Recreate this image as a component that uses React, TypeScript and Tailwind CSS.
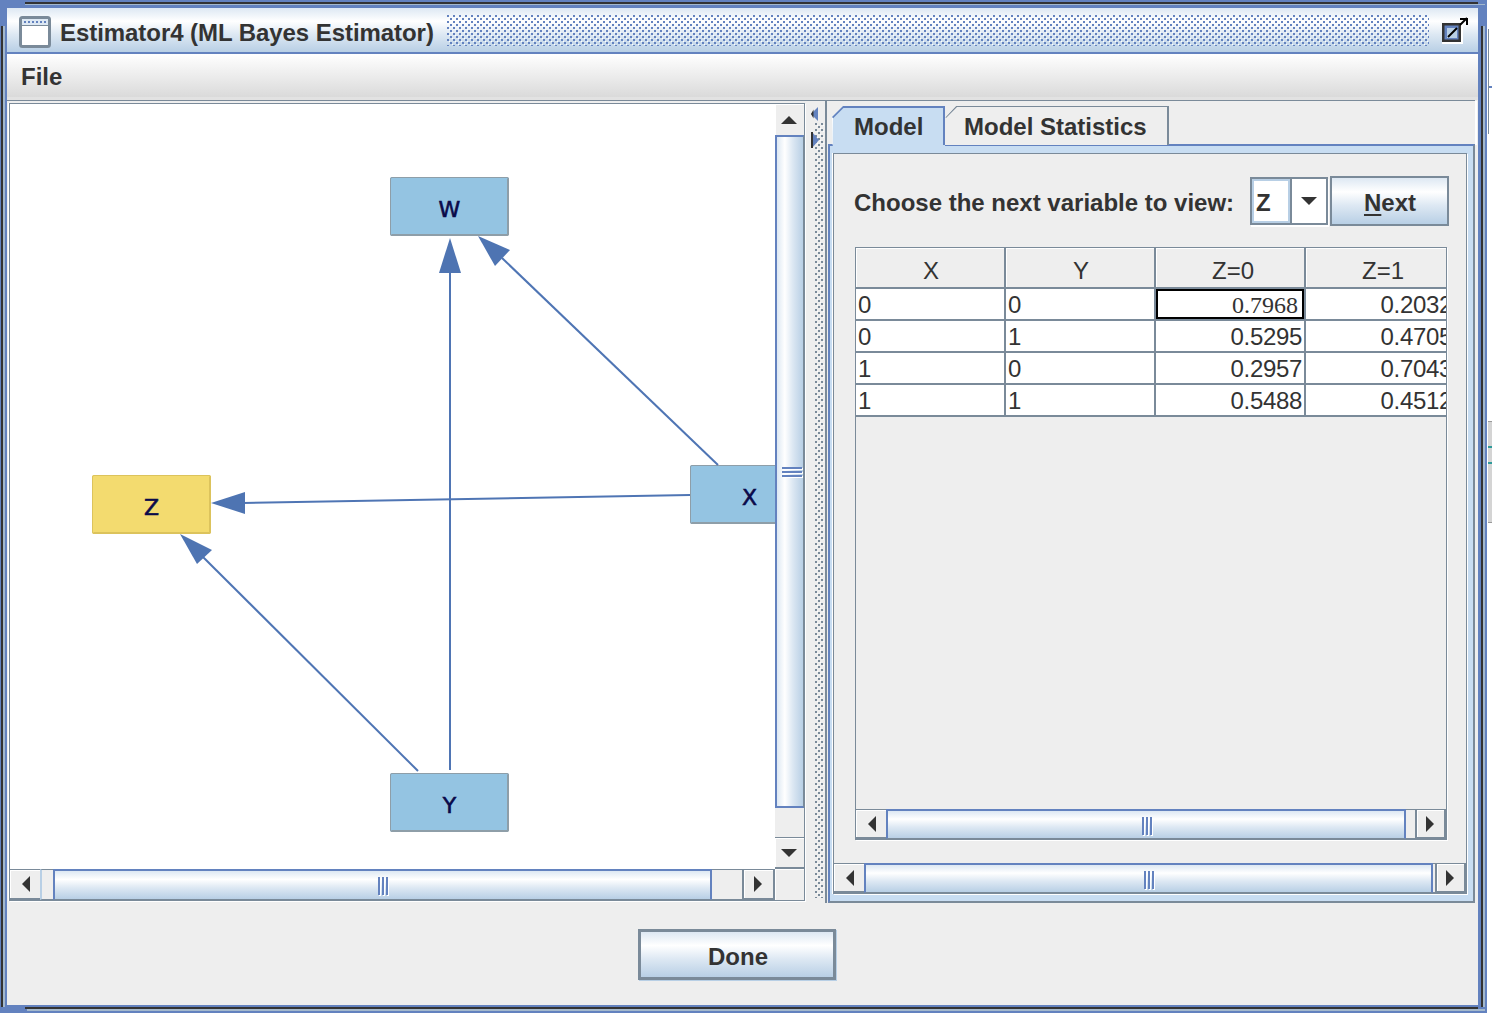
const FONT = 'font-["Liberation_Sans",Arial,sans-serif]';

// Metal "ocean" gradients
const oceanV =
  'bg-[linear-gradient(180deg,#DDE8F3_0%,#ffffff_30%,#DDE8F3_60%,#B8CFE5_100%)]';
const oceanH =
  'bg-[linear-gradient(90deg,#DDE8F3_0%,#ffffff_30%,#DDE8F3_60%,#B8CFE5_100%)]';

type Dir = 'up' | 'down' | 'left' | 'right';

function Arrow({ dir }: { dir: Dir }) {
  const horizontal = dir === 'left' || dir === 'right';
  const points = {
    up: '8,0 16,8 0,8',
    down: '0,0 16,0 8,8',
    left: '8,0 8,16 0,8',
    right: '0,0 8,8 0,16',
  }[dir];
  return (
    <svg width={horizontal ? 8 : 16} height={horizontal ? 16 : 8} className="block">
      <polygon points={points} fill="#333333" />
    </svg>
  );
}

function ScrollButton({ dir, className }: { dir: Dir; className: string }) {
  return (
    <div
      className={`flex shrink-0 items-center justify-center bg-[#eeeeee] border-[#7A8A99] shadow-[inset_1px_1px_0_#fff] ${className}`}
    >
      <Arrow dir={dir} />
    </div>
  );
}

function HScrollBar({ left, thumb, gap, right, grip }: { left: number; thumb: number; gap: number; right: number; grip: number }) {
  return (
    <div className="flex h-full w-full bg-[#eeeeee]">
      <div style={{ width: left }} className="flex shrink-0">
        <ScrollButton dir="left" className="w-[30px] border-t border-b-2 pl-[1px]" />
        <div className="flex-1 border-y border-l-2 border-[#7A8A99] border-l-[#B8CFE5] bg-[#eeeeee]" />
      </div>
      <div
        style={{ width: thumb }}
        className={`relative shrink-0 border-t-2 border-l-2 border-r-2 border-b border-[#6382BF] border-b-[#7A8A99] ${oceanV}`}
      >
        <div style={{ left: grip }} className="absolute top-[6px] flex gap-[2px]">
          <div className="h-[18px] w-[2px] bg-[#6382BF] shadow-[1px_1px_0_#fff]" />
          <div className="h-[18px] w-[2px] bg-[#6382BF] shadow-[1px_1px_0_#fff]" />
          <div className="h-[18px] w-[2px] bg-[#6382BF] shadow-[1px_1px_0_#fff]" />
        </div>
      </div>
      <div style={{ width: gap }} className="shrink-0 border-y border-[#7A8A99] bg-[#eeeeee]" />
      <ScrollButton dir="right" className="flex-1 border-t border-l-2 border-r-2 border-b-2 pr-[1px]" />
    </div>
  );
}

function VScrollBar() {
  return (
    <div className="flex h-full w-full flex-col bg-[#eeeeee]">
      <ScrollButton dir="up" className="h-[31px] border-l-0 pr-[1px]" />
      <div className={`relative h-[673px] shrink-0 border-2 border-[#6382BF] border-r-[#7A8A99] border-r ${oceanH}`}>
        <div className="absolute left-[5px] top-[330px] flex flex-col gap-[2px]">
          <div className="h-[2px] w-[20px] bg-[#6382BF] shadow-[1px_1px_0_#fff]" />
          <div className="h-[2px] w-[20px] bg-[#6382BF] shadow-[1px_1px_0_#fff]" />
          <div className="h-[2px] w-[20px] bg-[#6382BF] shadow-[1px_1px_0_#fff]" />
        </div>
      </div>
      <div className="h-[30px] shrink-0 border-b border-[#7A8A99]" />
      <ScrollButton dir="down" className="flex-1 border-b-2 pr-[1px]" />
    </div>
  );
}

function Bumps({ id, width, height, fg, bg }: { id: string; width: number; height: number; fg: string; bg: string }) {
  return (
    <svg width={width} height={height} className="block shrink-0">
      <defs>
        <pattern id={id} width="6" height="6" patternUnits="userSpaceOnUse">
          <rect x="0" y="0" width="2" height="2" fill={fg} />
          <rect x="3" y="3" width="2" height="2" fill={fg} />
          <rect x="2" y="2" width="1" height="1" fill={bg} />
          <rect x="5" y="5" width="1" height="1" fill={bg} />
        </pattern>
      </defs>
      <rect width={width} height={height} fill={`url(#${id})`} />
    </svg>
  );
}

function TitleIcon() {
  return (
    <svg width="32" height="32" viewBox="0 0 32 32" className="mt-[8px] block shrink-0">
      <rect x="1.5" y="1.5" width="29" height="29" rx="2" fill="#fff" stroke="#7A8A99" strokeWidth="3" />
      <rect x="3" y="3" width="26" height="6" fill="#DDE8F3" />
      <path d="M5 6h22" stroke="#6382BF" strokeWidth="2" strokeDasharray="2 2" />
      <rect x="3" y="9" width="26" height="1" fill="#7A8A99" />
    </svg>
  );
}

function MaximizeIcon() {
  return (
    <svg width="27" height="28" viewBox="0 0 27 28" className="mt-[9px] block shrink-0">
      <rect x="0" y="6" width="21" height="21" fill="#fff" />
      <rect x="1.25" y="7.25" width="16.5" height="16.5" fill="#6382BF" stroke="#333" strokeWidth="2.5" />
      <rect x="5" y="11" width="10" height="10" fill="#B8CFE5" />
      <path d="M6 20 L15 11" stroke="#000" strokeWidth="2" />
      <path d="M18 1h8v7h-2V3h-6z" fill="#000" />
      <path d="M18 8l7-7" stroke="#000" strokeWidth="2" />
    </svg>
  );
}

function GraphNode({ label, left, top, color }: { label: string; left: number; top: number; color: 'blue' | 'yellow' }) {
  return (
    <div
      style={{ left, top }}
      className={`absolute flex h-[59px] w-[119px] items-center justify-center rounded-[2px] border-2 pt-[6px] leading-none text-[#0a0a4a] font-["DejaVu_Sans",sans-serif] ${
        color === 'blue'
          ? 'border-transparent border-r-[#8e9ea8] border-b-[#8e9ea8] outline outline-[#8e9ea8] -outline-offset-1 bg-[#94C4E2]'
          : 'border-transparent border-r-[#dcc35c] border-b-[#dcc35c] outline outline-[#dcc35c] -outline-offset-1 bg-[#F3DB6F]'
      }`}
    >
      <span className="text-[22px] [-webkit-text-stroke:0.6px_#0a0a4a]">{label}</span>
    </div>
  );
}

function Graph() {
  return (
    <div className="relative h-[765px] w-[765px] shrink-0 overflow-hidden bg-white">
      <GraphNode label="W" left={380} top={73} color="blue" />
      <GraphNode label="Z" left={82} top={371} color="yellow" />
      <GraphNode label="X" left={680} top={361} color="blue" />
      <GraphNode label="Y" left={380} top={669} color="blue" />
      <svg width="765" height="765" viewBox="10 104 765 765" className="absolute left-0 top-0">
        <g stroke="#4F75B4" strokeWidth="2" fill="none">
          <line x1="450" y1="770" x2="450" y2="270" />
          <line x1="690" y1="495" x2="243" y2="503" />
          <line x1="418" y1="771" x2="203" y2="557" />
          <line x1="718" y1="465" x2="502" y2="258" />
        </g>
        <g fill="#4E74B2">
          <polygon points="450,238 461,273 439,273" />
          <polygon points="211,503 245,492 245,514" />
          <polygon points="180,534 212,550 197,564" />
          <polygon points="478,236 510,250 495,266" />
        </g>
      </svg>
    </div>
  );
}

const ROWS = [
  ['0', '0', '0.7968', '0.2032'],
  ['0', '1', '0.5295', '0.4705'],
  ['1', '0', '0.2957', '0.7043'],
  ['1', '1', '0.5488', '0.4512'],
];

function HeaderCell({ label, className }: { label: string; className: string }) {
  return (
    <div className={`flex h-full w-[150px] shrink-0 items-center justify-center border-r-2 border-b-2 border-[#7A8A99] bg-[#eeeeee] pt-[7px] shadow-[inset_1px_1px_0_#fff] ${className}`}>
      {label}
    </div>
  );
}

function ProbTable() {
  return (
    <div className="flex flex-1 flex-col overflow-hidden text-[24px] leading-none font-normal text-[#333333]">
      <div className="flex h-[41px] w-[600px] shrink-0">
        <HeaderCell label="X" className="pl-[2px]" />
        <HeaderCell label="Y" className="pl-[2px]" />
        <HeaderCell label="Z=0" className="pl-[6px]" />
        <HeaderCell label="Z=1" className="pl-[6px]" />
      </div>
      {ROWS.map((row, r) => (
        <div key={r} className="flex h-[32px] w-[600px] shrink-0 bg-white">
          {row.map((val, c) => {
            if (r === 0 && c === 2) {
              return (
                <div key={c} className="h-full w-[150px] shrink-0 border-r-2 border-b-2 border-[#7A8A99]">
                  <div className='flex h-full items-center justify-end border-2 border-black pr-[4px] pt-[2px] font-["Liberation_Serif",serif]'>
                    {val}
                  </div>
                </div>
              );
            }
            return (
              <div
                key={c}
                className={`flex h-full w-[150px] shrink-0 items-center border-r-2 border-b-2 border-[#7A8A99] pt-[2px] ${
                  c < 2 ? 'justify-start pl-[2px]' : 'justify-end pr-[2px] tracking-[-0.33px]'
                }`}
              >
                {val}
              </div>
            );
          })}
        </div>
      ))}
    </div>
  );
}

function Tabs() {
  return (
    <div className="relative z-10 flex h-[38px] shrink-0 pl-[4px]">
      <div className="relative h-[47px] w-[113px] shrink-0 bg-[#C8DDF2] [clip-path:polygon(11px_0,100%_0,100%_39px,100%_100%,1px_100%,0_11px)]">
        <div className="absolute left-[11px] right-0 top-0 h-[2px] bg-[#6382BF]" />
        <div className="absolute bottom-[8px] right-0 top-0 w-[2px] bg-[#6382BF]" />
        <div className="absolute bottom-[8px] left-0 top-[11px] w-[1px] bg-white" />
        <svg width="13" height="13" className="absolute left-0 top-0">
          <line x1="0.5" y1="11.5" x2="11.5" y2="0.5" stroke="#6382BF" strokeWidth="2" />
        </svg>
        <span className="absolute left-[22px] top-[8px] text-[24px] leading-[26px]">Model</span>
      </div>
      <div className="relative h-[39px] w-[224px] shrink-0 bg-[#eeeeee] [clip-path:polygon(11px_0,100%_0,100%_100%,0_100%,0_12px)]">
        <div className="absolute left-[11px] right-0 top-0 h-[1px] bg-[#7A8A99]" />
        <div className="absolute bottom-0 right-0 top-0 w-[2px] bg-[#7A8A99]" />
        <svg width="13" height="13" className="absolute left-0 top-0">
          <line x1="0.5" y1="11.5" x2="11.5" y2="0.5" stroke="#7A8A99" strokeWidth="1.5" />
        </svg>
        <span className="absolute left-[19px] top-[8px] text-[24px] leading-[26px]">Model Statistics</span>
      </div>
    </div>
  );
}

function ComboBox() {
  return (
    <div className="flex h-[48px] w-[78px] shrink-0 border-2 border-[#7A8A99] bg-white shadow-[1px_2px_0_#fff]">
      <div className="flex w-[38px] shrink-0 items-center border-2 border-[#B8CFE5] pl-[2px] pt-[4px] text-[24px] leading-none">Z</div>
      <div className="flex flex-1 items-center justify-center border-l-2 border-[#7A8A99]">
        <Arrow dir="down" />
      </div>
    </div>
  );
}

export default function App() {
  return (
    <div className={`relative h-[1015px] w-[1492px] overflow-hidden bg-white text-[#333333] ${FONT}`}>
      <div className="relative h-[1013px] w-[1487px] bg-[#6382BF] pb-[8px] pl-[7px] pr-[9px] pt-[8px]">
        {/* window frame lines */}
        <div className="absolute left-[25px] right-[9px] top-[2px] h-[2px] bg-[#333333]" />
        <div className="absolute left-[25px] right-[2px] top-[4px] h-[1px] bg-[#A3B8CC]" />
        <div className="absolute bottom-[4px] left-[25px] right-[9px] h-[2px] bg-[#333333]" />
        <div className="absolute bottom-[2px] left-[27px] right-[2px] h-[2px] bg-[#A3B8CC]" />
        <div className="absolute bottom-[6px] left-[1px] top-[26px] w-[2px] bg-[#333333]" />
        <div className="absolute bottom-[6px] left-[3px] top-[26px] w-[2px] bg-[#A3B8CC]" />
        <div className="absolute bottom-[6px] right-[4px] top-[26px] w-[2px] bg-[#333333]" />
        <div className="absolute bottom-[6px] right-[2px] top-[26px] w-[2px] bg-[#A3B8CC]" />

        <div className="relative flex h-[997px] w-[1471px] flex-col rounded-tr-[2px] bg-[#eeeeee]">
          {/* title bar */}
          <div className={`flex h-[46px] shrink-0 items-start border-b-2 border-[#6382BF] pl-[12px] pr-[9px] ${oceanV}`}>
            <TitleIcon />
            <span className="ml-[9px] mt-[13px] w-[387px] shrink-0 whitespace-nowrap text-[24px] font-bold leading-none tracking-[-0.06px]">
              Estimator4 (ML Bayes Estimator)
            </span>
            <div className="mt-[7px]">
              <Bumps id="title-bumps" width={982} height={31} fg="#6382BF" bg="#ffffff" />
            </div>
            <div className="ml-auto">
              <MaximizeIcon />
            </div>
          </div>

          {/* menu bar */}
          <div className="flex h-[43px] shrink-0 items-center bg-[linear-gradient(180deg,#ffffff,#DADADA)] pl-[14px] pt-[2px] text-[24px] font-bold">
            File
          </div>
          <div className="h-[3px] shrink-0 bg-[#e2e2e2]" />
          <div className="mr-[3px] h-[1px] shrink-0 bg-[#7A8A99]" />

          {/* split pane */}
          <div className="flex h-[802px] shrink-0 pl-[2px]">
            <div className="mt-[2px] h-[798px] w-[796px] shrink-0 border border-[#7A8A99] bg-[#eeeeee] shadow-[1px_1px_0_#fff,-1px_0_0_#fff]">
              <div className="flex h-[765px]">
                <Graph />
                <div className="flex-1">
                  <VScrollBar />
                </div>
              </div>
              <div className="flex h-[31px]">
                <div className="h-full w-[765px] shrink-0">
                  <HScrollBar left={43} thumb={659} gap={30} right={33} grip={323} />
                </div>
                <div className="flex-1 shadow-[inset_1px_1px_0_#fff]" />
              </div>
            </div>

            {/* divider */}
            <div className="relative h-full w-[22px] shrink-0 border-r-2 border-[#7A8A99] pl-[10px] pt-[22px]">
              <Bumps id="split-bumps" width={9} height={775} fg="#7A8A99" bg="#ffffff" />
              <svg width="10" height="42" className="absolute left-[6px] top-[6px] block">
                <polygon points="7,0 0,7 7,14" fill="#6382BF" />
                <path d="M2.5 2.5 L0 7 L2.5 11.5 Z" fill="#333" />
                <polygon points="1,25 8,33 1,41" fill="#6382BF" />
                <rect x="0" y="25" width="2" height="16" fill="#333" />
              </svg>
            </div>

            {/* tabbed pane */}
            <div className="ml-[1px] flex h-full w-[647px] shrink-0 flex-col pt-[5px] text-[24px] font-bold">
              <Tabs />
              <div className="h-[759px] shrink-0 border-2 border-l-[#6382BF] border-t-[#6382BF] border-r-[#7A8A99] border-b-[#7A8A99] bg-[#C8DDF2] pb-[7px] pl-[3px] pr-[6px] pt-[7px]">
                <div className="flex h-full flex-col border border-[#7A8A99] bg-[#eeeeee] shadow-[1px_1px_0_#fff,-1px_0_0_#fff]">
                  <div className="mt-[22px] flex h-[50px] shrink-0 items-center pl-[20px]">
                    <span className="w-[396px] shrink-0 whitespace-nowrap pt-[4px] text-[24px] leading-none">
                      Choose the next variable to view:
                    </span>
                    <ComboBox />
                    <div className={`ml-[2px] flex h-[50px] w-[119px] shrink-0 items-center justify-center border-2 border-[#7A8A99] pt-[4px] pl-[1px] leading-none ${oceanV}`}>
                      <span>
                        <span className="underline decoration-2 underline-offset-[3px]">N</span>ext
                      </span>
                    </div>
                  </div>

                  <div className="ml-[21px] mt-[21px] flex h-[593px] w-[592px] shrink-0 flex-col border border-[#7A8A99] shadow-[1px_1px_0_#fff]">
                    <ProbTable />
                    <div className="h-[30px] shrink-0">
                      <HScrollBar left={30} thumb={520} gap={9} right={31} grip={254} />
                    </div>
                  </div>

                  <div className="mt-[23px] h-[30px] shrink-0">
                    <HScrollBar left={30} thumb={569} gap={2} right={31} grip={278} />
                  </div>
                </div>
              </div>
            </div>
            <div className="h-[44px] w-[2px] shrink-0 bg-white" />
          </div>

          {/* footer */}
          <div className="flex-1 pl-[631px] pt-[26px]">
            <div className={`flex h-[51px] w-[198px] items-center justify-center border-[3px] border-[#7A8A99] pl-[2px] pt-[4px] text-[24px] font-bold leading-none shadow-[1px_1px_0_#B8CFE5] ${oceanV}`}>
              Done
            </div>
          </div>
        </div>
      </div>

      {/* bits of the window behind, at the right edge */}
      <div className="absolute left-[1488px] top-[29px] h-[105px] w-[1px] bg-[#7A8A99]" />
      <div className="absolute left-[1489px] top-[86px] h-[2px] w-[3px] bg-[#6382BF]" />
      <div className="absolute left-[1488px] top-[421px] h-[102px] w-[4px] border-y border-[#999] bg-[#d4d4d4]" />
      <div className="absolute left-[1488px] top-[446px] h-[2px] w-[4px] bg-[#2f9a9a]" />
      <div className="absolute left-[1488px] top-[462px] h-[2px] w-[4px] bg-[#2f9a9a]" />
    </div>
  );
}
